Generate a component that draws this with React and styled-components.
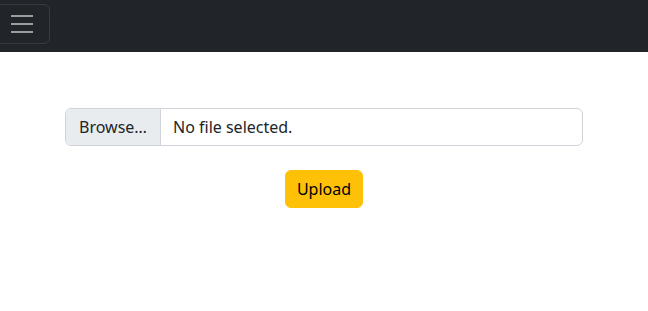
import React from 'react';
import styled, { createGlobalStyle } from 'styled-components';

const GlobalStyle = createGlobalStyle`
  * { box-sizing: border-box; }
  body {
    margin: 0;
    background: #fff;
    font-family: "Noto Sans", "Liberation Sans", sans-serif;
    color: #212529;
  }
`;

const Navbar = styled.nav`
  height: 52px;
  background: #212529;
  display: flex;
  align-items: flex-start;
  padding-top: 4px;
  overflow: hidden;
`;

const Toggler = styled.button`
  width: 56px;
  height: 40px;
  margin-left: -6px;
  background: transparent;
  border: 1px solid rgba(255, 255, 255, 0.1);
  border-radius: 6px;
  display: flex;
  align-items: center;
  justify-content: center;
  padding: 0;
`;

const Main = styled.main`
  display: flex;
  flex-direction: column;
  align-items: center;
  padding-top: 56px;
`;

const FileInput = styled.div`
  width: 518px;
  height: 38px;
  display: flex;
  border: 1px solid #ced4da;
  border-radius: 6px;
  overflow: hidden;
  font-size: 16px;
`;

const Browse = styled.span`
  background: #e9ecef;
  border-right: 1px solid #ced4da;
  padding: 0 12px;
  display: flex;
  align-items: center;
  width: 95px;
  justify-content: center;
`;

const FileName = styled.span`
  padding: 0 12px;
  display: flex;
  align-items: center;
`;

const UploadButton = styled.button`
  margin-top: 24px;
  width: 78px;
  height: 38px;
  background: #ffc107;
  border: 1px solid #ffc107;
  border-radius: 6px;
  color: #000;
  font-family: inherit;
  font-size: 16px;
  padding: 0;
`;

function App() {
  return (
    <>
      <GlobalStyle />
      <Navbar>
        <Toggler>
          <svg width="30" height="30" viewBox="0 0 30 30">
            <path
              d="M4 7h22M4 15h22M4 23h22"
              stroke="rgba(255,255,255,0.55)"
              strokeWidth="2"
              strokeLinecap="butt"
            />
          </svg>
        </Toggler>
      </Navbar>
      <Main>
        <FileInput>
          <Browse>Browse…</Browse>
          <FileName>No file selected.</FileName>
        </FileInput>
        <UploadButton>Upload</UploadButton>
      </Main>
    </>
  );
}

export default App;
